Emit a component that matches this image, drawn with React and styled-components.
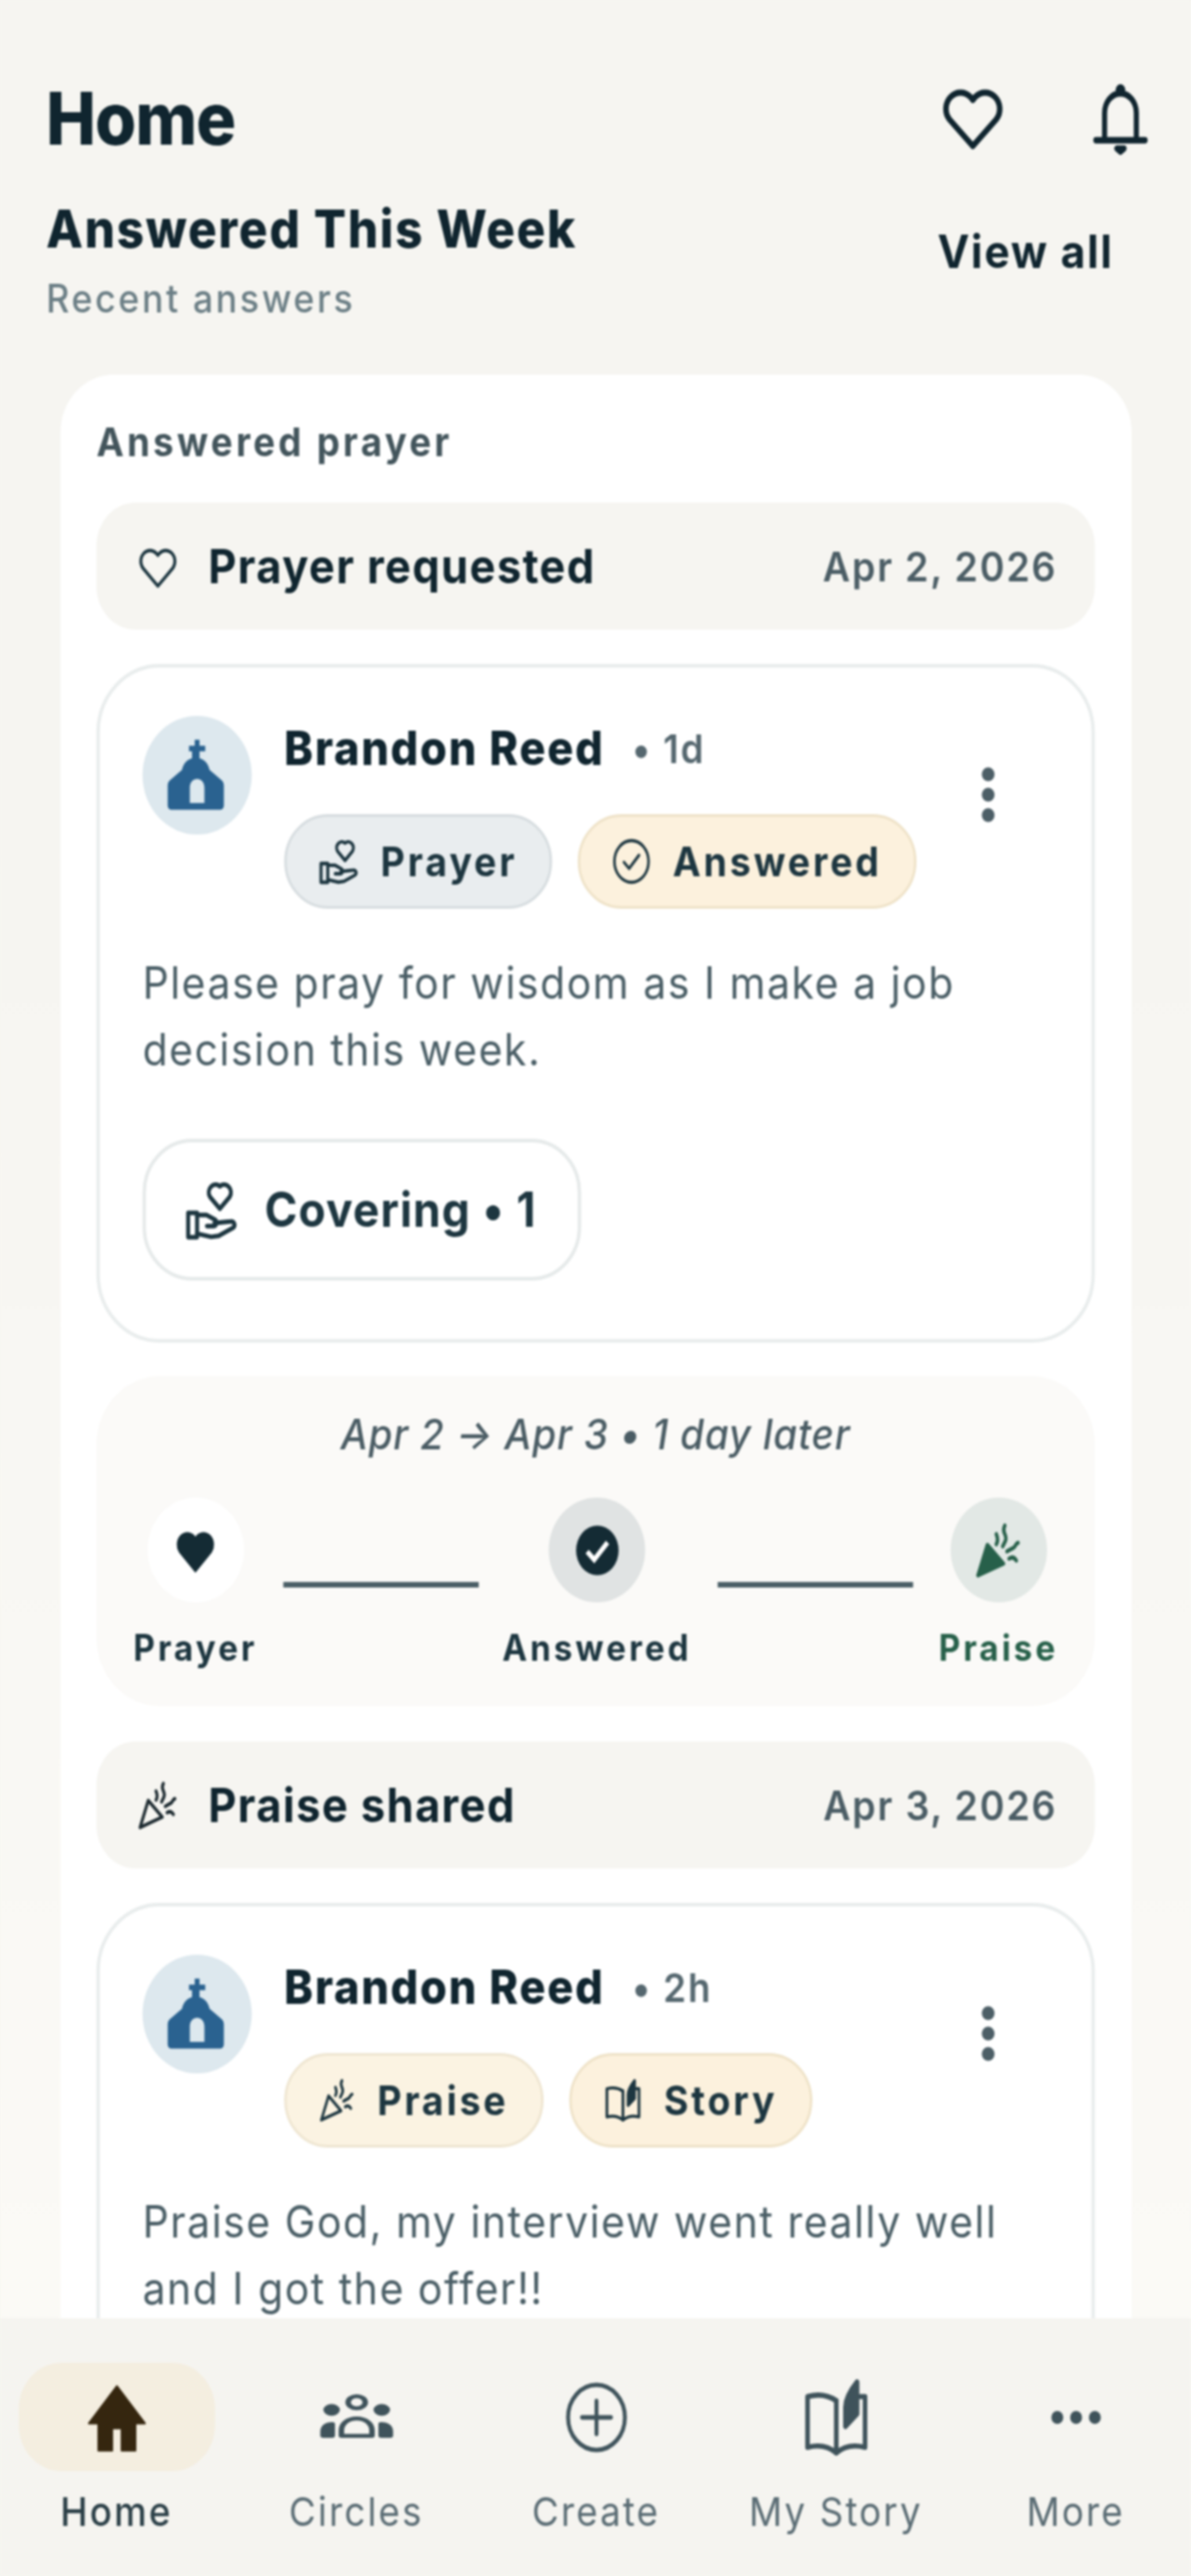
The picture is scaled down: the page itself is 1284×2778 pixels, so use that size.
import React from "react";
import styled, { createGlobalStyle } from "styled-components";

const GlobalStyle = createGlobalStyle`
  html, body {
    margin: 0;
    padding: 0;
    background: #f6f5f1;
  }
  * {
    box-sizing: border-box;
  }
`;

const Viewport = styled.div`
  width: 1284px;
  height: 2778px;
  overflow: hidden;
`;

/* the capture is squeezed horizontally, so everything is laid out wider and scaled back */
const Stage = styled.div`
  width: 1396px;
  height: 2778px;
  transform: scaleX(0.92);
  transform-origin: left top;
  display: flex;
  flex-direction: column;
  overflow: hidden;
  font-family: Inter, "Liberation Sans", sans-serif;
  color: #10252f;
  background: linear-gradient(180deg, #f6f5f1 0%, #f6f5f1 30%, #fcfbf7 100%);
  filter: blur(0.9px);
`;

const Content = styled.div`
  flex: 1;
  min-height: 0;
  overflow: hidden;
`;

const TopBar = styled.div`
  height: 184px;
  padding: 72px 54px 0;
  display: flex;
  justify-content: space-between;
  align-items: flex-start;
`;

const Title = styled.h1`
  margin: 0;
  font-size: 78px;
  line-height: 112px;
  font-weight: 800;
  letter-spacing: -1px;
`;

const TopIcons = styled.div`
  display: flex;
  align-items: center;
  gap: 96px;
  margin-right: -7px;
  padding-top: 12px;
`;

const SectionHead = styled.div`
  padding: 0 54px;
  height: 220px;
  display: flex;
  justify-content: space-between;
  align-items: flex-start;
`;

const SectionTitle = styled.h2`
  margin: 28px 0 0;
  font-size: 56px;
  line-height: 70px;
  font-weight: 800;
  letter-spacing: 2px;
`;

const SectionSub = styled.div`
  margin-top: 8px;
  font-size: 42px;
  line-height: 64px;
  font-weight: 500;
  letter-spacing: 3px;
  color: #6c7f86;
`;

const ViewAll = styled.div`
  margin: 50px 37px 0 0;
  font-size: 50px;
  line-height: 74px;
  font-weight: 700;
  letter-spacing: 2px;
`;

const OuterCard = styled.section`
  margin: 0 70px 0 71px;
  padding: 41px 43px 0 42px;
  background: #fff;
  border-radius: 62px 62px 0 0;
  height: 2400px;
`;

const CardLabel = styled.div`
  font-size: 43px;
  line-height: 62px;
  font-weight: 700;
  letter-spacing: 3.8px;
  color: #43555c;
  margin-bottom: 35px;
`;

const EventRow = styled.div`
  height: 137px;
  padding: 0 44px 0 46px;
  border-radius: 46px;
  background: #f6f5f1;
  display: flex;
  align-items: center;
  margin-top: ${(p) => p.$top || 0}px;
`;

const EventName = styled.div`
  flex: 1;
  margin-left: 33px;
  font-size: 51px;
  font-weight: 700;
  letter-spacing: 1.6px;
`;

const EventDate = styled.div`
  font-size: 44px;
  font-weight: 600;
  letter-spacing: 2.1px;
  color: #4b5d65;
`;

const PostCard = styled.article`
  margin-top: 37px;
  height: ${(p) => p.$height}px;
  padding: 52px 50px 0;
  border: 4px solid #e9eded;
  border-radius: 74px;
  background: #fff;
`;

const PostHead = styled.div`
  display: flex;
  align-items: flex-start;
`;

const Avatar = styled.div`
  width: 128px;
  height: 128px;
  flex: none;
  border-radius: 50%;
  background: #dde8ee;
  display: flex;
  align-items: center;
  justify-content: center;
`;

const PostMain = styled.div`
  flex: 1;
  margin-left: 38px;
`;

const NameLine = styled.div`
  display: flex;
  align-items: center;
  height: 69px;
`;

const Name = styled.span`
  font-size: 51px;
  font-weight: 800;
  letter-spacing: 2px;
`;

const Age = styled.span`
  margin-left: 32px;
  font-size: 43px;
  font-weight: 600;
  letter-spacing: 2.2px;
  color: #55676f;
`;

const Chips = styled.div`
  display: flex;
  gap: 30px;
  margin-top: 37px;
`;

const Chip = styled.div`
  height: 102px;
  padding: 0 38px 0 36px;
  border-radius: 51px;
  border: 3px solid ${(p) => p.$line};
  background: ${(p) => p.$bg};
  display: flex;
  align-items: center;
  gap: 24px;
  font-size: 44px;
  line-height: 92px;
  font-weight: 700;
  letter-spacing: 3.3px;
  color: #1d3640;
`;

const Kebab = styled.div`
  width: 60px;
  margin: 53px 41px 0 0;
  display: flex;
  justify-content: center;
`;

const PostText = styled.p`
  margin: 44px 0 0;
  font-size: 48px;
  line-height: 72px;
  font-weight: 400;
  letter-spacing: 1.8px;
  color: #4a5e66;
`;

const CoverButton = styled.div`
  margin-top: 60px;
  width: 514px;
  height: 153px;
  border: 4px solid #e6eaea;
  border-radius: 58px;
  display: flex;
  align-items: center;
  padding-left: 44px;
  gap: 29px;
  font-size: 52px;
  font-weight: 700;
  letter-spacing: 1.3px;
  color: #1d3640;
`;

const Journey = styled.div`
  margin-top: 36px;
  height: 356px;
  padding-top: 36px;
  border-radius: 74px;
  background: #fbfaf8;
`;

const JourneyTitle = styled.div`
  text-align: center;
  font-size: 45px;
  line-height: 54px;
  font-style: italic;
  font-weight: 500;
  letter-spacing: 1px;
  color: #4a5c64;
`;

const Steps = styled.div`
  display: grid;
  grid-template-columns: 200px 1fr 200px 1fr 200px;
  padding: 41px 13px 0 16px;
`;

const Step = styled.div`
  display: flex;
  flex-direction: column;
  align-items: center;
`;

const StepDot = styled.div`
  width: 113px;
  height: 113px;
  border-radius: 50%;
  background: ${(p) => p.$bg};
  display: flex;
  align-items: center;
  justify-content: center;
`;

const StepLabel = styled.div`
  margin-top: 24px;
  font-size: 39px;
  line-height: 50px;
  font-weight: 700;
  letter-spacing: 3.5px;
  white-space: nowrap;
  color: ${(p) => p.$color || "#1d3640"};
`;

const StepLine = styled.div`
  width: 229px;
  height: 6px;
  margin-top: 91px;
  background: #4b5f67;
  justify-self: ${(p) => (p.$end ? "end" : "start")};
  margin-left: ${(p) => (p.$end ? 0 : 3)}px;
`;

const BottomNav = styled.nav`
  height: 278px;
  flex: none;
  background: #f5f4f0;
  display: grid;
  grid-template-columns: repeat(5, 281px);
  margin-left: -4px;
  padding-top: 48px;
`;

const NavItem = styled.div`
  display: flex;
  flex-direction: column;
  align-items: center;
  color: ${(p) => (p.$active ? "#2b3f47" : "#5a6c74")};
`;

const NavIcon = styled.div`
  width: 230px;
  height: 117px;
  border-radius: 50px;
  background: ${(p) => (p.$active ? "#f4eee0" : "transparent")};
  display: flex;
  align-items: center;
  justify-content: center;
`;

const NavLabel = styled.div`
  margin-top: 18px;
  font-size: 43px;
  line-height: 50px;
  font-weight: ${(p) => (p.$active ? 500 : 400)};
  letter-spacing: 2.5px;
  white-space: nowrap;
`;

const Icon = ({ size, h, children, color = "currentColor", sw = 2, fill = "none" }) => (
  <svg
    width={size}
    height={h || size}
    viewBox="0 0 24 24"
    fill={fill}
    stroke={color}
    strokeWidth={sw}
    strokeLinecap="round"
    strokeLinejoin="round"
    preserveAspectRatio="none"
  >
    {children}
  </svg>
);

const HeartPath = "M12 21 L3.9 12.7 A5 5 0 0 1 11.2 5.9 L12 6.8 L12.8 5.9 A5 5 0 0 1 20.1 12.7 Z";

const HeartIcon = ({ size, h, color, sw, fill }) => (
  <Icon size={size} h={h} color={color} sw={sw} fill={fill}>
    <path d={HeartPath} />
  </Icon>
);

const BellIcon = () => (
  <Icon size={72} h={82} color="#10252f" sw={2}>
    <path d="M5.800 19V10.800a6.200 6.200 0 0 1 12.400 0V19" />
    <path d="M2.400 19.400h19.200" />
    <circle cx="12" cy="3.600" r="0.900" fill="#10252f" />
    <path d="M10.600 22h2.800l-1.400 1z" fill="#10252f" />
  </Icon>
);

const HandHeartIcon = ({ size, h }) => (
  <Icon size={size} h={h} color="#1d3640" sw={1.700}>
    <path d="M15.500 11.500l-4.200-4.400a2.900 2.900 0 0 1 4.200-3.900a2.900 2.900 0 0 1 4.200 3.900z" />
    <path d="M2 13h3.800v9H2z" />
    <path d="M5.800 13.800h4l3.600 1.700a1.300 1.300 0 0 1-.8 2.400H10" />
    <path d="M13.200 16.800l6.800-.6c1.700-.2 2.400 1.600 1 2.400l-6 2.900-3.200.4-6-1.200" />
  </Icon>
);

const CheckCircleIcon = () => (
  <Icon size={48} h={54} color="#1d3640" sw={1.500}>
    <circle cx="12" cy="12" r="10" />
    <path d="M7.600 12.400l3 3 5.800-6.400" />
  </Icon>
);

const PopperIcon = ({ size, h, color = "#1d3640", solid }) => (
  <Icon size={size} h={h} color={color} sw={1.600}>
    <path d="M2.400 21.800l4.400-12 7.600 7.400z" fill={solid ? color : "none"} />
    <path d="M11 9.600c1-1.400.6-2.800 0-4" />
    <path d="M14 10.400l1.200-2c.6-1 .2-2.200-.4-3.200s-.4-2 .2-3" />
    <path d="M16 12.400l3-1.400c1-.4 1-1.800 2.200-2" />
    <path d="M17 15.200c1.400-.8 2.400-.6 3.400.8" />
  </Icon>
);

const BookPenIcon = ({ size, h, color = "#1d3640", sw = 1.600 }) => (
  <Icon size={size} h={h} color={color} sw={sw}>
    <path d="M12 7.200C9.400 5.600 6 5.200 2.600 6v14.600c3.400-.8 6.800-.4 9.400 1.600 2.600-2 6-2.400 9.400-1.600V6h-1.600" />
    <path d="M12 7.200v15" />
    <path d="M15 14.600V9c0-2.600 1.800-5 3.800-7.200V11z" fill={color} />
  </Icon>
);

const ChurchIcon = () => (
  <svg width="76" height="80" viewBox="0 0 24 24" preserveAspectRatio="none">
    <path
      fill="#2a6290"
      fillRule="evenodd"
      d="M11.100 0.500h1.800v2h2.100v1.800h-2.100v2.200c2 .5 3.300 1.900 3.700 3.800l4.300 3.200c.7.5 1 1.100 1 1.900v6.400c0 .8-.6 1.400-1.400 1.400H2.500c-.8 0-1.400-.6-1.400-1.400v-6.400c0-.8.3-1.400 1-1.900l4.300-3.200c.4-1.900 1.700-3.300 3.700-3.800V4.300H9V2.500h2.100zM12 13.200c-1.600 0-2.700 1.200-2.700 2.900v4.900h5.400v-4.900c0-1.700-1.100-2.900-2.700-2.900z"
    />
  </svg>
);

const KebabIcon = () => (
  <svg width="22" height="64" viewBox="0 0 22 64">
    <circle cx="11" cy="10" r="7.500" fill="#4d5f67" />
    <circle cx="11" cy="32" r="7.500" fill="#4d5f67" />
    <circle cx="11" cy="54" r="7.500" fill="#4d5f67" />
  </svg>
);

const HomeIcon = () => (
  <Icon size={76} h={78} color="#35260f" sw={0.600} fill="#35260f">
    <path d="M12 1.600L1.600 14h3.500v9h5.200v-7.400h3.400V23h5.200v-9h3.500z" />
  </Icon>
);

const CirclesIcon = () => (
  <Icon size={86} h={56} color="#3f535b" sw={1.800}>
    <circle cx="12" cy="5" r="2.800" />
    <circle cx="3.800" cy="8.500" r="1.800" fill="#3f535b" />
    <circle cx="20.200" cy="8.500" r="1.800" fill="#3f535b" />
    <path d="M7 20.500v-2.500c0-3 2-5.500 5-5.500s5 2.500 5 5.500v2.500z" />
    <path d="M1 20.500v-2c0-2 1-3.500 3-3.500v5.500z" fill="#3f535b" />
    <path d="M23 20.500v-2c0-2-1-3.500-3-3.500v5.500z" fill="#3f535b" />
  </Icon>
);

const CreateIcon = () => (
  <Icon size={74} h={78} color="#3f535b" sw={1.500}>
    <circle cx="12" cy="12" r="10.800" />
    <path d="M12 6.500v11M6.500 12h11" />
  </Icon>
);

const MoreIcon = () => (
  <svg width="60" height="20" viewBox="0 0 60 20">
    <circle cx="8" cy="10" r="7" fill="#3f535b" />
    <circle cx="30" cy="10" r="7" fill="#3f535b" />
    <circle cx="52" cy="10" r="7" fill="#3f535b" />
  </svg>
);

const navItems = [
  { label: "Home", icon: <HomeIcon />, active: true },
  { label: "Circles", icon: <CirclesIcon /> },
  { label: "Create", icon: <CreateIcon /> },
  { label: "My Story", icon: <BookPenIcon size={86} h={90} color="#3f535b" sw={1.500} /> },
  { label: "More", icon: <MoreIcon /> }
];

const Post = ({ height, age, chips, lines, children }) => (
  <PostCard $height={height}>
    <PostHead>
      <Avatar>
        <ChurchIcon />
      </Avatar>
      <PostMain>
        <NameLine>
          <Name>Brandon Reed</Name>
          <Age>• {age}</Age>
        </NameLine>
        <Chips>{chips}</Chips>
      </PostMain>
      <Kebab>
        <KebabIcon />
      </Kebab>
    </PostHead>
    <PostText>
      {lines[0]}
      <br />
      {lines[1]}
    </PostText>
    {children}
  </PostCard>
);

export default function App() {
  return (
    <Viewport>
      <GlobalStyle />
      <Stage>
        <Content>
          <TopBar>
            <Title>Home</Title>
            <TopIcons>
              <HeartIcon size={82} h={84} color="#10252f" sw={1.900} />
              <BellIcon />
            </TopIcons>
          </TopBar>
          <SectionHead>
            <div>
              <SectionTitle>Answered This Week</SectionTitle>
              <SectionSub>Recent answers</SectionSub>
            </div>
            <ViewAll>View all</ViewAll>
          </SectionHead>
          <OuterCard>
            <CardLabel>Answered prayer</CardLabel>
            <EventRow>
              <HeartIcon size={52} h={56} color="#1d3640" sw={1.600} />
              <EventName>Prayer requested</EventName>
              <EventDate>Apr 2, 2026</EventDate>
            </EventRow>
            <Post
              height={732}
              age="1d"
              lines={["Please pray for wisdom as I make a job", "decision this week."]}
              chips={
                <>
                  <Chip $bg="#e9edef" $line="#d7dde0">
                    <HandHeartIcon size={50} h={54} />
                    Prayer
                  </Chip>
                  <Chip $bg="#fcf1dd" $line="#efe3c9">
                    <CheckCircleIcon />
                    Answered
                  </Chip>
                </>
              }
            >
              <CoverButton>
                <HandHeartIcon size={66} h={70} />
                Covering • 1
              </CoverButton>
            </Post>
            <Journey>
              <JourneyTitle>Apr 2 → Apr 3 • 1 day later</JourneyTitle>
              <Steps>
                <Step>
                  <StepDot $bg="#ffffff">
                    <HeartIcon size={54} h={60} color="#142b34" sw={1} fill="#142b34" />
                  </StepDot>
                  <StepLabel>Prayer</StepLabel>
                </Step>
                <StepLine />
                <Step>
                  <StepDot $bg="#e0e3e3">
                    <svg width="52" height="56" viewBox="0 0 24 24" preserveAspectRatio="none">
                      <circle cx="12" cy="12" r="11.500" fill="#142b34" />
                      <path d="M6.500 12.500l3.800 3.800 7.200-8" fill="none" stroke="#fff" strokeWidth="2.400" />
                    </svg>
                  </StepDot>
                  <StepLabel>Answered</StepLabel>
                </Step>
                <StepLine $end />
                <Step>
                  <StepDot $bg="#e2e8e5">
                    <PopperIcon size={60} h={66} color="#27604a" solid />
                  </StepDot>
                  <StepLabel $color="#27604a">Praise</StepLabel>
                </Step>
              </Steps>
            </Journey>
            <EventRow $top={38}>
              <PopperIcon size={52} h={58} color="#1d2a30" />
              <EventName>Praise shared</EventName>
              <EventDate>Apr 3, 2026</EventDate>
            </EventRow>
            <Post
              height={732}
              age="2h"
              lines={["Praise God, my interview went really well", "and I got the offer!!"]}
              chips={
                <>
                  <Chip $bg="#fbf3e2" $line="#efe6d2">
                    <PopperIcon size={46} h={52} />
                    Praise
                  </Chip>
                  <Chip $bg="#fcf1dd" $line="#efe3c9">
                    <BookPenIcon size={48} h={50} />
                    Story
                  </Chip>
                </>
              }
            />
          </OuterCard>
        </Content>
        <BottomNav>
          {navItems.map((item) => (
            <NavItem key={item.label} $active={item.active}>
              <NavIcon $active={item.active}>{item.icon}</NavIcon>
              <NavLabel $active={item.active}>{item.label}</NavLabel>
            </NavItem>
          ))}
        </BottomNav>
      </Stage>
    </Viewport>
  );
}
